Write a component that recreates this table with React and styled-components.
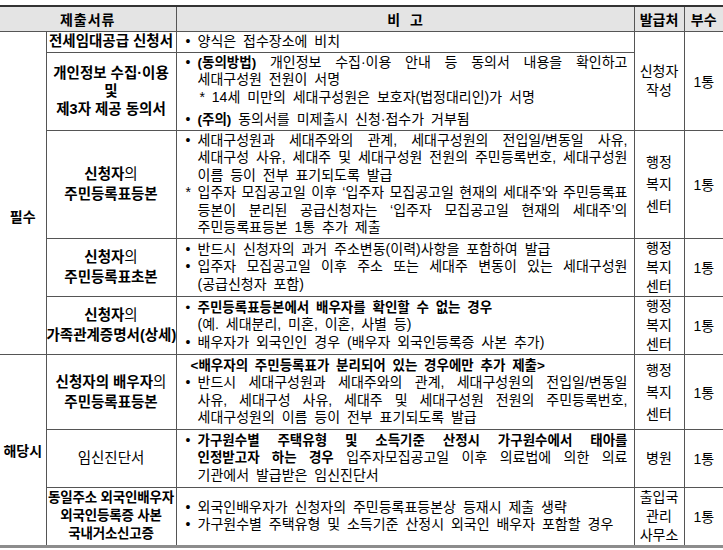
import React from "react";
import styled, { createGlobalStyle } from "styled-components";

const Global = createGlobalStyle`
  html, body { margin: 0; padding: 0; background: #fff; }
  body {
    font-family: "Liberation Sans", "Noto Sans CJK KR", sans-serif;
    font-size: 14px;
    color: #000;
  }
`;

const Page = styled.div`
  width: 723px;
  padding-top: 5px;
`;

const Table = styled.table`
  width: 723px;
  table-layout: fixed;
  border-collapse: collapse;
  border-top: 2px solid #333;
  border-bottom: 3px solid #8c8c8c;
`;

const Head = styled.th`
  background: #e4e4e4;
  font-weight: bold;
  font-size: 14px;
  height: 24px;
  padding: 0;
  text-align: center;
  border-bottom: 1px solid #555;
  border-left: ${(p) => (p.$first ? "none" : "1px solid #555")};
  letter-spacing: ${(p) => p.$ls || "0"};
  word-spacing: ${(p) => p.$ws || "0"};
`;

const Row = styled.tr`
  height: ${(p) => p.$h}px;
`;

const Cell = styled.td`
  border: 1px solid #555;
  padding: 0;
  vertical-align: middle;
  &:first-child { border-left: none; }
  &:last-child { border-right: none; }
`;

const GroupCell = styled(Cell)`
  text-align: center;
  font-weight: bold;
  padding-top: ${(p) => p.$shift || 0}px;
`;

const NameCell = styled(Cell)`
  text-align: center;
  line-height: ${(p) => p.$lh || 17}px;
  font-weight: ${(p) => (p.$bold ? "bold" : "normal")};
  font-size: ${(p) => p.$fs || 14}px;
  letter-spacing: ${(p) => p.$ls || 0}px;
  white-space: nowrap;
  padding: 0;
`;

const Strong = styled.b`
  font-weight: bold;
  font-size: ${(p) => p.$fs || 13.5}px;
`;

const Note = styled(Cell)`
  padding: 1px 6px 1px 9px;
  line-height: 17.5px;
`;

const Item = styled.div`
  display: flex;
  margin-top: ${(p) => p.$gap || 0}px;
  font-weight: ${(p) => (p.$bold ? "bold" : "normal")};
  font-size: ${(p) => (p.$bold ? 13.5 : 14)}px;
`;

const Mark = styled.span`
  flex: 0 0 12px;
  text-align: left;
  font-weight: normal;
`;

const Body = styled.div`
  flex: 1;
  min-width: 0;
`;

const Line = styled.div`
  text-align: ${(p) => (p.$j ? "justify" : "left")};
  text-align-last: ${(p) => (p.$j ? "justify" : "auto")};
  word-spacing: ${(p) => (p.$j ? 0 : 3)}px;
  white-space: ${(p) => (p.$j ? "normal" : "nowrap")};
  padding-left: ${(p) => p.$indent || 0}px;
`;

const Issuer = styled(Cell)`
  text-align: center;
  line-height: ${(p) => p.$lh || 19}px;
`;

const Count = styled(Cell)`
  text-align: center;
`;

const Bullet = ({ mark = "•", bold, gap, children }) => (
  <Item $bold={bold} $gap={gap}>
    <Mark>{mark}</Mark>
    <Body>{children}</Body>
  </Item>
);

const Center = ({ lines }) =>
  lines.map((l, i) => <div key={i}>{l}</div>);

export default function App() {
  return (
    <Page>
      <Global />
      <Table>
        <colgroup>
          <col style={{ width: 46 }} />
          <col style={{ width: 130 }} />
          <col style={{ width: 458 }} />
          <col style={{ width: 50 }} />
          <col style={{ width: 39 }} />
        </colgroup>
        <thead>
          <tr>
            <Head $first colSpan={2} $ls="1px">제출서류</Head>
            <Head $ws="6px">비 고</Head>
            <Head>발급처</Head>
            <Head>부수</Head>
          </tr>
        </thead>
        <tbody>
          <Row $h={19}>
            <GroupCell rowSpan={5} $shift={46}>필수</GroupCell>
            <NameCell $bold $fs={14.5}>전세임대공급 신청서</NameCell>
            <Note>
              <Bullet>
                <Line>양식은 접수장소에 비치</Line>
              </Bullet>
            </Note>
            <Issuer rowSpan={2}>
              <Center lines={["신청자", "작성"]} />
            </Issuer>
            <Count rowSpan={2}>1통</Count>
          </Row>
          <Row $h={78}>
            <NameCell $bold $lh={18} $fs={14.5}>
              <Center lines={["개인정보 수집·이용", "및", "제3자 제공 동의서"]} />
            </NameCell>
            <Note>
              <Bullet>
                <Line $j>
                  <Strong>(동의방법)</Strong> 개인정보 수집·이용 안내 등 동의서 내용을 확인하고
                </Line>
                <Line>세대구성원 전원이 서명</Line>
                <Line $indent={2}>* 14세 미만의 세대구성원은 보호자(법정대리인)가 서명</Line>
              </Bullet>
              <Bullet gap={5}>
                <Line>
                  <Strong>(주의)</Strong> 동의서를 미제출시 신청·접수가 거부됨
                </Line>
              </Bullet>
            </Note>
          </Row>
          <Row $h={104}>
            <NameCell $lh={20} $fs={14.5}>
              <div>
                <Strong $fs={14.5}>신청자</Strong>의
              </div>
              <div>
                <Strong $fs={14.5}>주민등록표등본</Strong>
              </div>
            </NameCell>
            <Note>
              <Bullet>
                <Line $j>세대구성원과 세대주와의 관계, 세대구성원의 전입일/변동일 사유,</Line>
                <Line $j>세대구성 사유, 세대주 및 세대구성원 전원의 주민등록번호, 세대구성원</Line>
                <Line>이름 등이 전부 표기되도록 발급</Line>
              </Bullet>
              <Bullet mark="*">
                <Line $j>입주자 모집공고일 이후 ‘입주자 모집공고일 현재의 세대주’와 주민등록표</Line>
                <Line $j>등본이 분리된 공급신청자는 ‘입주자 모집공고일 현재의 세대주’의</Line>
                <Line>주민등록표등본 1통 추가 제출</Line>
              </Bullet>
            </Note>
            <Issuer $lh={22}>
              <Center lines={["행정", "복지", "센터"]} />
            </Issuer>
            <Count>1통</Count>
          </Row>
          <Row $h={58}>
            <NameCell $lh={20} $fs={14.5}>
              <div>
                <Strong $fs={14.5}>신청자</Strong>의
              </div>
              <div>
                <Strong $fs={14.5}>주민등록표초본</Strong>
              </div>
            </NameCell>
            <Note>
              <Bullet>
                <Line>반드시 신청자의 과거 주소변동(이력)사항을 포함하여 발급</Line>
              </Bullet>
              <Bullet>
                <Line $j>입주자 모집공고일 이후 주소 또는 세대주 변동이 있는 세대구성원</Line>
                <Line>(공급신청자 포함)</Line>
              </Bullet>
            </Note>
            <Issuer>
              <Center lines={["행정", "복지", "센터"]} />
            </Issuer>
            <Count>1통</Count>
          </Row>
          <Row $h={58}>
            <NameCell $lh={20} $fs={14.5}>
              <div>
                <Strong $fs={14.5}>신청자</Strong>의
              </div>
              <div>
                <Strong $fs={14.5}>가족관계증명서(상세)</Strong>
              </div>
            </NameCell>
            <Note>
              <Bullet bold>
                <Line>주민등록표등본에서 배우자를 확인할 수 없는 경우</Line>
              </Bullet>
              <Line $indent={12}>(예. 세대분리, 미혼, 이혼, 사별 등)</Line>
              <Bullet>
                <Line>배우자가 외국인인 경우 (배우자 외국인등록증 사본 추가)</Line>
              </Bullet>
            </Note>
            <Issuer>
              <Center lines={["행정", "복지", "센터"]} />
            </Issuer>
            <Count>1통</Count>
          </Row>
          <Row $h={75}>
            <GroupCell rowSpan={3}>해당시</GroupCell>
            <NameCell $lh={20} $fs={14.5}>
              <div>
                <Strong $fs={14.5}>신청자의 배우자</Strong>의
              </div>
              <div>
                <Strong $fs={14.5}>주민등록표등본</Strong>
              </div>
            </NameCell>
            <Note>
              <Line $indent={5}>
                <Strong>&lt;배우자의 주민등록표가 분리되어 있는 경우에만 추가 제출&gt;</Strong>
              </Line>
              <Bullet>
                <Line $j>반드시 세대구성원과 세대주와의 관계, 세대구성원의 전입일/변동일</Line>
                <Line $j>사유, 세대구성 사유, 세대주 및 세대구성원 전원의 주민등록번호,</Line>
                <Line>세대구성원의 이름 등이 전부 표기되도록 발급</Line>
              </Bullet>
            </Note>
            <Issuer $lh={22}>
              <Center lines={["행정", "복지", "센터"]} />
            </Issuer>
            <Count>1통</Count>
          </Row>
          <Row $h={58}>
            <NameCell $fs={14.5}>임신진단서</NameCell>
            <Note>
              <Bullet>
                <Line $j>
                  <Strong>가구원수별 주택유형 및 소득기준 산정시 가구원수에서 태아를</Strong>
                </Line>
                <Line $j>
                  <Strong>인정받고자 하는 경우</Strong> 입주자모집공고일 이후 의료법에 의한 의료
                </Line>
                <Line>기관에서 발급받은 임신진단서</Line>
              </Bullet>
            </Note>
            <Issuer>병원</Issuer>
            <Count>1통</Count>
          </Row>
          <Row $h={57}>
            <NameCell $bold $lh={18} $fs={13.5} $ls={-0.2}>
              <Center lines={["동일주소 외국인배우자", "외국인등록증 사본", "국내거소신고증"]} />
            </NameCell>
            <Note>
              <Bullet>
                <Line>외국인배우자가 신청자의 주민등록표등본상 등재시 제출 생략</Line>
              </Bullet>
              <Bullet>
                <Line>가구원수별 주택유형 및 소득기준 산정시 외국인 배우자 포함할 경우</Line>
              </Bullet>
            </Note>
            <Issuer $lh={19}>
              <Center lines={["출입국", "관리", "사무소"]} />
            </Issuer>
            <Count>1통</Count>
          </Row>
        </tbody>
      </Table>
    </Page>
  );
}
